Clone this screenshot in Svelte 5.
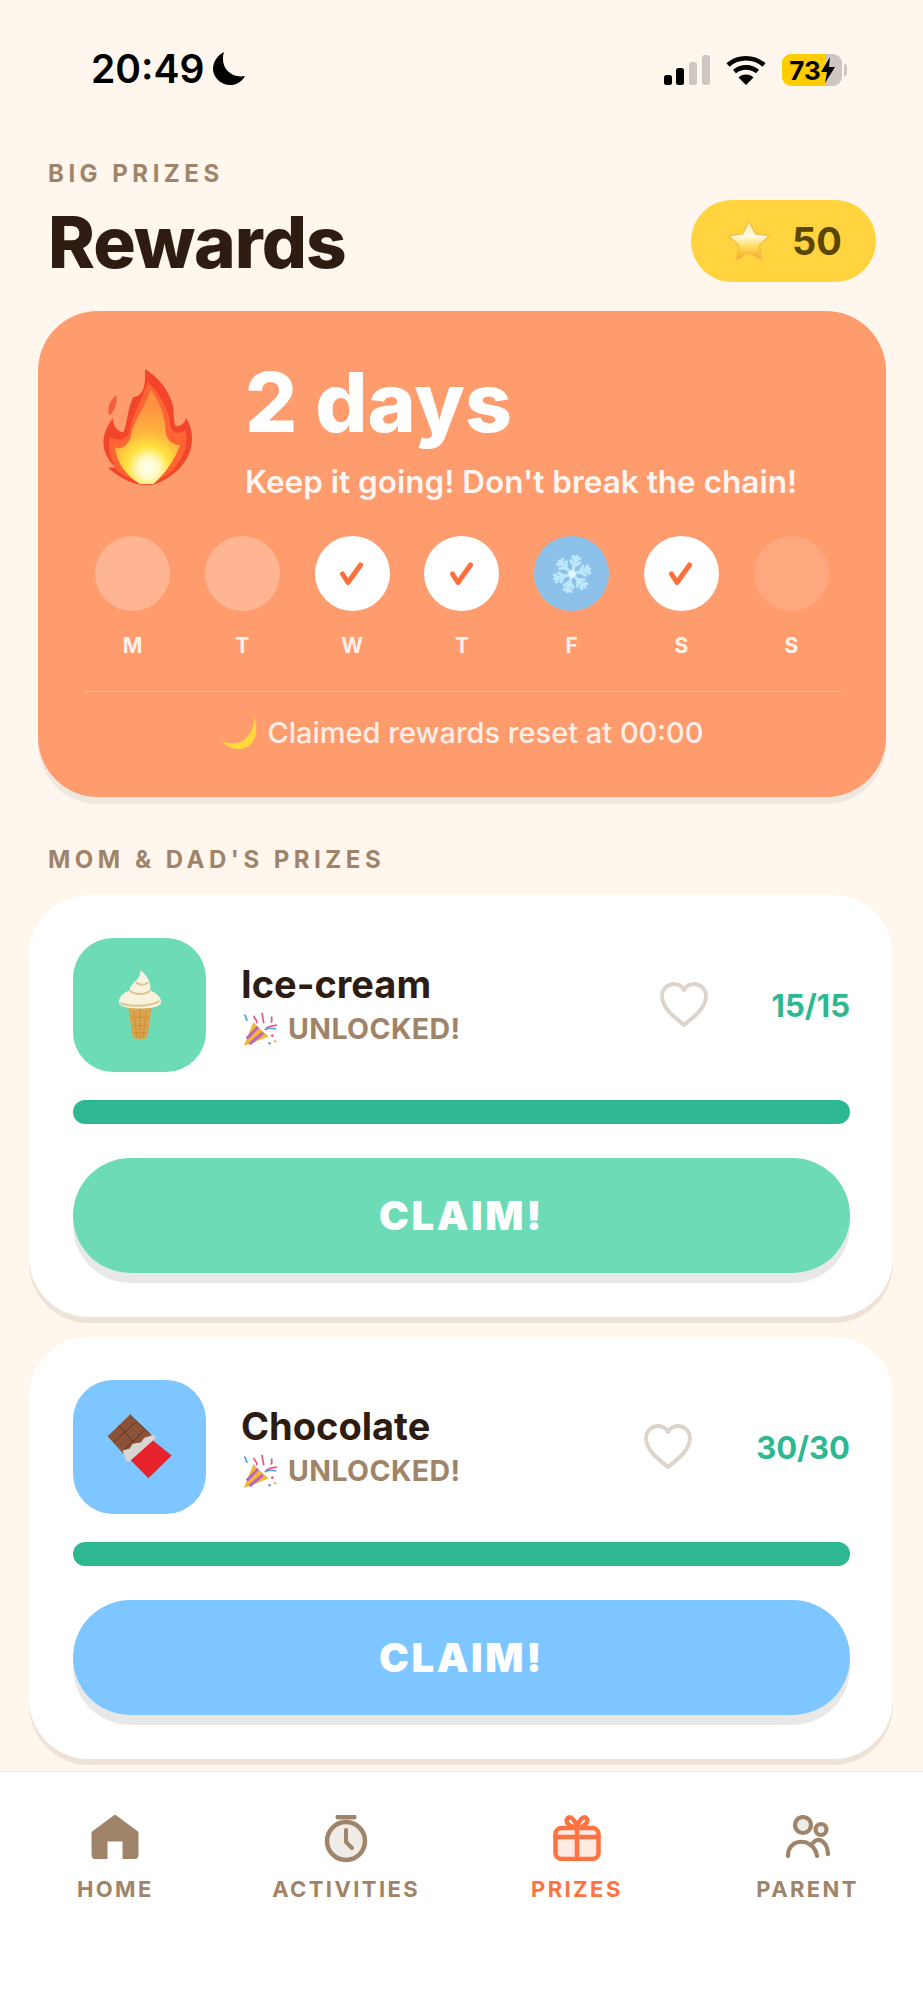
<script>
  const days = [
    { label: 'M', state: 'missed' },
    { label: 'T', state: 'missed' },
    { label: 'W', state: 'done' },
    { label: 'T', state: 'done' },
    { label: 'F', state: 'frozen' },
    { label: 'S', state: 'done' },
    { label: 'S', state: 'future' }
  ];

  const prizes = [
    { name: 'Ice-cream', count: '15/15', color: '#6cdbb6', icon: 'icecream' },
    { name: 'Chocolate', count: '30/30', color: '#7ec6ff', icon: 'chocolate' }
  ];

  const tabs = ['HOME', 'ACTIVITIES', 'PRIZES', 'PARENT'];
</script>

{#snippet popper()}
  <svg class="popper" viewBox="0 0 40 40">
    <path d="M3 38 L13 13 L29 28 Z" fill="#f2b632" />
    <path d="M6 30 L18 18" stroke="#b565c9" stroke-width="3" />
    <path d="M9 36 L23 24" stroke="#b565c9" stroke-width="3" />
    <path d="M14 6 C12 9 19 10 16 14 M22 3 L24 14 M33 7 C30 9 35 11 31 13 M26 20 C30 16 34 17 38 16" stroke="#e9588a" stroke-width="1.8" fill="none" />
    <path d="M3 5 C7 6 3 9 7 11 M25 21 C29 18 33 19 37 20" stroke="#4c9fe8" stroke-width="1.8" fill="none" />
    <circle cx="33" cy="27" r="1.4" fill="#e9588a" />
    <circle cx="36" cy="33" r="1.3" fill="#f2b632" />
    <circle cx="30" cy="35" r="1.3" fill="#4c9fe8" />
  </svg>
{/snippet}

<div class="screen">
  <div class="status">
    <div class="clock">
      <span>20:49</span>
      <svg width="34" height="34" viewBox="0 0 34 34"><path d="M13 0 C3 5 -2 18 6 27 C14 36 28 35 34 24 C21 27 8 16 13 0 Z" /></svg>
    </div>
    <div class="sys">
      <svg width="46" height="30" viewBox="0 0 46 30">
        <rect x="0" y="20" width="8" height="10" rx="2.5" fill="#000" />
        <rect x="12" y="13" width="8" height="17" rx="2.5" fill="#000" />
        <rect x="25" y="7" width="8" height="23" rx="2.5" fill="#cdc6c2" />
        <rect x="38" y="0" width="8" height="30" rx="2.5" fill="#cdc6c2" />
      </svg>
      <svg width="40" height="30" viewBox="0 0 40 30" fill="none" stroke="#000" stroke-width="4.6">
        <path d="M2 10 C12 1 28 1 38 10" />
        <path d="M8.5 16.5 C15 11 25 11 31.5 16.5" />
        <path d="M20 30 L12.5 22.5 C16 18.5 24 18.5 27.5 22.5 Z" fill="#000" stroke="none" />
      </svg>
      <div class="battery">
        <div class="cell">
          <span>73</span>
          <svg width="14" height="26" viewBox="0 0 14 26"><path d="M9 0 L0 15 H6 L4 26 L14 10 H8 Z" /></svg>
        </div>
        <i class="nub"></i>
      </div>
    </div>
  </div>

  <main class="page">
    <header class="head">
      <div>
        <div class="eyebrow">BIG PRIZES</div>
        <h1>Rewards</h1>
      </div>
      <div class="coins">
        <svg width="48" height="48" viewBox="0 0 50 50">
          <defs>
            <linearGradient id="star" x1="0" y1="0" x2="0" y2="1">
              <stop offset="0" stop-color="#ffe9a0" />
              <stop offset="0.38" stop-color="#fffbe6" />
              <stop offset="0.68" stop-color="#ffd955" />
              <stop offset="1" stop-color="#f2a41c" />
            </linearGradient>
          </defs>
          <path d="M25 4 L31.5 17.5 L46 19.5 L35.5 30 L38.5 45 L25 37.5 L11.5 45 L14.5 30 L4 19.5 L18.5 17.5 Z" fill="url(#star)" stroke="#f7bd4d" stroke-width="1.5" stroke-linejoin="round" />
        </svg>
        <span>50</span>
      </div>
    </header>

    <section class="streak">
      <div class="streak-top">
        <svg class="fire" viewBox="0 0 360 405">
          <defs>
            <radialGradient id="flameCore" gradientUnits="userSpaceOnUse" cx="175" cy="330" r="190">
              <stop offset="0" stop-color="#fffef2" />
              <stop offset="0.16" stop-color="#fffbc8" />
              <stop offset="0.34" stop-color="#ffe23e" />
              <stop offset="0.6" stop-color="#ffb03f" />
              <stop offset="1" stop-color="#ff9142" />
            </radialGradient>
          </defs>
          <path d="M80 112 C82 135 72 165 58 172 C50 155 58 125 80 112 Z" fill="#f4603a" />
          <path d="M165 33 C200 55 240 95 250 150 C253 175 250 195 258 205 C272 205 285 195 288 180 C305 205 312 245 300 280 C285 325 240 365 190 380 L150 380 C110 372 80 352 55 330 C62 328 70 328 78 330 C50 305 35 270 42 235 C47 215 58 195 68 180 C70 200 78 220 100 223 C112 200 112 150 130 118 C140 115 150 112 157 100 C167 80 165 55 165 33 Z" fill="#f2452a" />
          <path d="M172 70 C205 105 236 150 240 195 C243 225 262 232 286 216 C298 255 280 300 248 338 L190 378 L150 378 L84 340 C62 310 52 270 60 236 C78 250 110 248 118 222 C125 170 158 130 172 70 Z" fill="#ff6534" />
          <path d="M182 95 C206 130 226 170 226 212 C228 248 246 258 270 262 C254 305 228 345 190 378 L150 378 C112 355 82 320 74 268 C92 278 114 262 122 238 C128 190 165 150 182 95 Z" fill="url(#flameCore)" />
        </svg>
        <div>
          <div class="streak-count">2 days</div>
          <div class="streak-sub">Keep it going! Don't break the chain!</div>
        </div>
      </div>

      <div class="week">
        {#each days as day}
          <div class="day">
            <div class="dot {day.state}">
              {#if day.state === 'done'}
                <svg width="26" height="26" viewBox="0 0 26 26" fill="none" stroke="#ff6f3c" stroke-width="5" stroke-linecap="round" stroke-linejoin="round"><path d="M3.5 13 L9 21.5 L21.5 4" /></svg>
              {:else if day.state === 'frozen'}
                <svg width="40" height="40" viewBox="-22 -22 44 44" fill="none" stroke="#bde8fb" stroke-width="3.4" stroke-linecap="round">
                  {#each [15, 75, 135, 195, 255, 315] as a}
                    <g transform="rotate({a})">
                      <path d="M0 0 V-20 M0 -9 L-5 -14 M0 -9 L5 -14 M0 -15 L-4 -19 M0 -15 L4 -19" />
                    </g>
                  {/each}
                  <circle r="4" fill="#e4f7ff" stroke="none" />
                </svg>
              {/if}
            </div>
            <span>{day.label}</span>
          </div>
        {/each}
      </div>

      <div class="reset">
        <svg width="36" height="34" viewBox="0 0 36 34"><path d="M32 0 C36 12 35 24 27 30 C19 35 7 34 0 25 C8 29 19 28 24 22 C30 16 33 8 32 0 Z" fill="#ffd93b" /></svg>
        <span>Claimed rewards reset at 00:00</span>
      </div>
    </section>

    <div class="eyebrow section">MOM &amp; DAD'S PRIZES</div>

    <div class="list">
      {#each prizes as prize}
        <article class="card">
          <div class="row">
            <div class="tile" style="background: {prize.color}">
              {#if prize.icon === 'icecream'}
                <svg width="48" height="70" viewBox="0 0 44 68">
                  <path d="M10 33 L34 33 L29 66 Q22 68 15 66 Z" fill="#dba44e" />
                  <path d="M16 40 L19 66 M22 38 V67 M28 40 L25 66 M13 46 L31 46 M14 54 L30 54 M15 61 L29 61" stroke="#c68c36" stroke-width="0.8" />
                  <path d="M22 0 C30 6 33 13 32 20 C40 23 44 29 42 33 C38 39 6 39 2 33 C0 28 5 22 12 20 C12 12 24 10 22 0 Z" fill="#f8f2de" />
                  <path d="M12 20 C18 25 28 24 32 20 M3 32 C12 36 32 36 41 30 M18 12 C22 15 27 15 30 12" stroke="#dcc794" stroke-width="2" fill="none" />
                </svg>
              {:else}
                <svg width="68" height="68" viewBox="100 115 205 205">
                  <path d="M172 120 L245 188 L165 252 L105 185 Z" fill="#8b5238" />
                  <path d="M138 152 L200 222 M172 120 L232 178 M122 204 L188 145 M148 232 L214 170" stroke="#5d3220" stroke-width="3" fill="none" />
                  <path d="M172 255 L238 195 L298 243 L228 312 Z" fill="#e8222c" />
                  <path d="M150 228 L172 222 L180 208 L205 204 L215 190 L245 180 L250 190 L170 262 L160 258 Z" fill="#d8d6d4" />
                </svg>
              {/if}
            </div>
            <div class="info">
              <div class="name">{prize.name}</div>
              <div class="unlocked">{@render popper()}<span>UNLOCKED!</span></div>
            </div>
            <svg class="heart" width="48" height="46" viewBox="0 0 48 46" fill="none" stroke="#ddd5cc" stroke-width="4" stroke-linejoin="round">
              <path d="M24 43 C14 35 2 26 2 14 C2 7 8 2 14 2 C18 2 22 4 24 8 C26 4 30 2 34 2 C40 2 46 7 46 14 C46 26 34 35 24 43 Z" />
            </svg>
            <div class="count">{prize.count}</div>
          </div>
          <div class="bar"></div>
          <button class="claim" style="background: {prize.color}">CLAIM!</button>
        </article>
      {/each}
    </div>
  </main>

  <nav class="tabs">
    {#each tabs as tab}
      <div class="tab" class:active={tab === 'PRIZES'}>
        {#if tab === 'HOME'}
          <svg width="48" height="44" viewBox="0 0 48 44"><path d="M24 0 L47 17 V40 Q47 44 43 44 H32 V26 H16 V44 H5 Q1 44 1 40 V17 Z" fill="#a08469" stroke="#a08469" stroke-linejoin="round" /></svg>
        {:else if tab === 'ACTIVITIES'}
          <svg width="44" height="48" viewBox="0 0 44 48" fill="#efebe7" stroke="#a08469" stroke-width="4.5" stroke-linecap="round" stroke-linejoin="round">
            <path d="M14 2 H30" stroke-width="5" />
            <circle cx="22" cy="26" r="19" />
            <path d="M22 15 V27 L28 33" fill="none" stroke-width="4" />
          </svg>
        {:else if tab === 'PRIZES'}
          <svg width="48" height="46" viewBox="0 0 48 46" fill="none" stroke="#ff7340" stroke-width="4.5" stroke-linecap="round" stroke-linejoin="round">
            <path d="M24 13 C18 12 12 8 14 4 C17 -1 23 6 24 13 C25 6 31 -1 34 4 C36 8 30 12 24 13 Z" />
            <rect x="2.5" y="13" width="43" height="31" rx="6" fill="#fdeae3" />
            <path d="M2.5 22 H45.5 M24 13 V44" />
          </svg>
        {:else}
          <svg width="44" height="44" viewBox="0 0 44 44" fill="#efebe7" stroke="#a08469" stroke-width="4.2" stroke-linecap="round">
            <circle cx="17" cy="10" r="8" />
            <circle cx="35" cy="14.5" r="5.5" />
            <path d="M2 41 C2 22 28 22 31 41 M27 28 C32 22 41 25 42 39" fill="none" />
          </svg>
        {/if}
        <span>{tab}</span>
      </div>
    {/each}
  </nav>
</div>

<style>
  :global(body) {
    background: #fff6ee;
  }

  .screen {
    width: 923px;
    height: 2000px;
    display: flex;
    flex-direction: column;
    overflow: hidden;
    background: #fff6ee;
    color: #2e1c12;
    font-family: Inter, "Liberation Sans", sans-serif;
  }

  /* status bar */
  .status {
    height: 150px;
    flex: none;
    box-sizing: border-box;
    padding: 52px 76px 0 91px;
    display: flex;
    justify-content: space-between;
    align-items: flex-start;
  }

  .clock {
    display: flex;
    align-items: center;
    gap: 7px;
    font-size: 39px;
    font-weight: 600;
    line-height: 34px;
    color: #000;
  }

  .sys {
    display: flex;
    align-items: center;
    gap: 16px;
    padding-top: 2px;
  }

  .battery {
    display: flex;
    align-items: center;
    gap: 2px;
  }

  .cell {
    width: 60px;
    height: 32px;
    border-radius: 9px;
    background: linear-gradient(to right, #ffcc00 73%, #cdc6c2 73%);
    display: flex;
    align-items: center;
    justify-content: center;
    font-size: 26px;
    font-weight: 700;
    color: #000;
  }

  .nub {
    width: 3px;
    height: 12px;
    border-radius: 0 3px 3px 0;
    background: #cdc6c2;
  }

  .page {
    flex: 1;
    min-height: 0;
    overflow: hidden;
  }

  .head {
    display: flex;
    justify-content: space-between;
    align-items: flex-end;
    padding: 11px 47px 0 48px;
  }

  .eyebrow {
    font-size: 24px;
    line-height: 26px;
    font-weight: 700;
    letter-spacing: 4.5px;
    color: #a08469;
    white-space: nowrap;
  }

  h1 {
    margin: 15px 0 0;
    font-size: 71px;
    line-height: 80px;
    font-weight: 800;
    letter-spacing: -1px;
  }

  .coins {
    width: 185px;
    height: 82px;
    border-radius: 41px;
    background: #ffd43f;
    display: flex;
    align-items: center;
    justify-content: center;
    gap: 19px;
    font-size: 38px;
    font-weight: 700;
    color: #5b4600;
  }

  /* streak card */
  .streak {
    margin: 29px 37px 0 38px;
    height: 486px;
    box-sizing: border-box;
    padding: 46px 46px 0 57px;
    border-radius: 60px;
    background: #ff9c6e;
    box-shadow: 0 7px 0 rgba(0, 0, 0, 0.06);
    color: #fff;
  }

  .streak-top {
    display: flex;
    gap: 35px;
  }

  .fire {
    width: 120px;
    height: 135px;
    margin: 1px 0 0 -5px;
    flex: none;
  }

  .streak-count {
    font-size: 82px;
    line-height: 92px;
    font-weight: 800;
  }

  .streak-sub {
    margin-top: 15px;
    font-size: 31.5px;
    line-height: 36px;
    font-weight: 600;
    color: rgba(255, 255, 255, 0.92);
    white-space: nowrap;
  }

  .week {
    margin-top: 36px;
    display: grid;
    grid-template-columns: repeat(7, 75px);
    column-gap: 34.8px;
  }

  .day {
    display: flex;
    flex-direction: column;
    align-items: center;
    gap: 23px;
    font-size: 21px;
    line-height: 24px;
    font-weight: 700;
    color: rgba(255, 255, 255, 0.9);
  }

  .dot {
    width: 75px;
    height: 75px;
    border-radius: 50%;
    display: flex;
    align-items: center;
    justify-content: center;
  }

  .missed {
    background: rgba(255, 255, 255, 0.25);
  }

  .future {
    background: rgba(255, 255, 255, 0.12);
  }

  .done {
    background: #fff;
  }

  .frozen {
    background: #8cc1ea;
  }

  .reset {
    margin: 33px -1px 0 -10px;
    padding-top: 20px;
    border-top: 1.5px solid rgba(255, 255, 255, 0.28);
    display: flex;
    justify-content: center;
    align-items: center;
    gap: 9px;
    font-size: 29px;
    line-height: 42px;
    font-weight: 500;
    color: rgba(255, 255, 255, 0.85);
    white-space: nowrap;
  }

  .section {
    margin: 50px 48px 0;
  }

  /* prize cards */
  .list {
    margin: 22px 30px 0 29px;
    display: flex;
    flex-direction: column;
    gap: 20px;
  }

  .card {
    height: 422px;
    box-sizing: border-box;
    padding: 43px 43px 0 44px;
    border-radius: 60px;
    background: #fff;
    box-shadow: 0 6px 0 rgba(96, 58, 24, 0.1);
  }

  .row {
    display: flex;
    align-items: center;
  }

  .tile {
    width: 133px;
    height: 134px;
    flex: none;
    border-radius: 40px;
    display: flex;
    align-items: center;
    justify-content: center;
  }

  .info {
    flex: 1;
    margin-left: 35px;
  }

  .name {
    font-size: 38px;
    line-height: 44px;
    font-weight: 700;
  }

  .unlocked {
    display: flex;
    align-items: center;
    gap: 9px;
    margin-top: 4px;
    font-size: 28.5px;
    line-height: 38px;
    font-weight: 700;
    letter-spacing: 0.4px;
    color: #a08469;
    white-space: nowrap;
  }

  .popper {
    width: 38px;
    height: 38px;
  }

  .heart {
    flex: none;
    margin-bottom: 1px;
  }

  .count {
    margin-left: 64px;
    font-size: 31px;
    font-weight: 700;
    color: #2eb892;
  }

  .bar {
    margin-top: 28px;
    height: 24px;
    border-radius: 12px;
    background: #2eb892;
  }

  .claim {
    display: block;
    width: 100%;
    height: 115px;
    margin-top: 34px;
    border: none;
    border-radius: 58px;
    box-shadow: 0 10px 0 rgba(0, 0, 0, 0.09);
    color: #fff;
    font-family: inherit;
    font-size: 40px;
    font-weight: 900;
    letter-spacing: 2.6px;
  }

  /* tab bar */
  .tabs {
    height: 229px;
    flex: none;
    box-sizing: border-box;
    padding-top: 43px;
    border-top: 1.5px solid #f2eeee;
    background: #fff;
    display: grid;
    grid-template-columns: repeat(4, 1fr);
  }

  .tab {
    display: flex;
    flex-direction: column;
    align-items: center;
    height: 87px;
    justify-content: space-between;
    font-size: 22px;
    line-height: 26px;
    font-weight: 700;
    letter-spacing: 2.4px;
    color: #a08469;
  }

  .tab svg {
    display: block;
  }

  .active {
    color: #ff7340;
  }
</style>
